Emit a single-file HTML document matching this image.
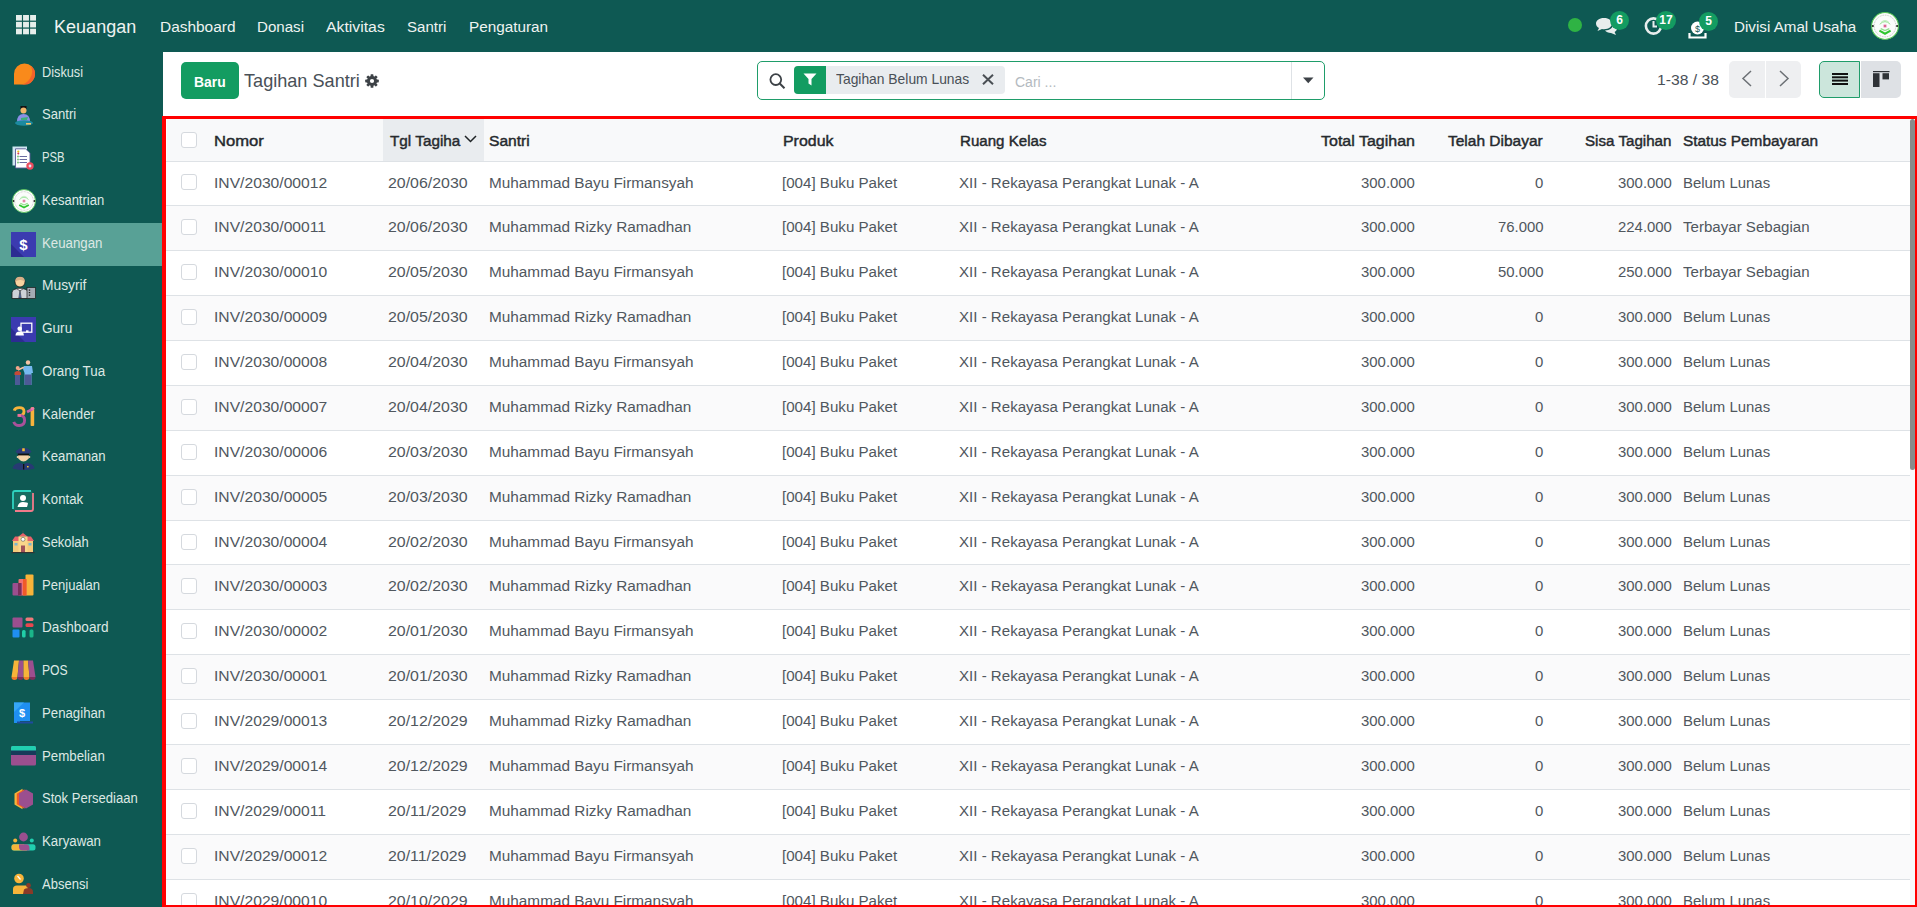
<!DOCTYPE html><html><head><meta charset="utf-8"><title>Tagihan Santri</title><style>
*{box-sizing:content-box}
html,body{margin:0;padding:0;width:1917px;height:907px;overflow:hidden;background:#fff;font-family:"Liberation Sans",sans-serif}
.t{position:absolute;white-space:nowrap;line-height:1;transform-origin:0 0}
.badge{position:absolute;border-radius:50%;background:#139c61;color:#fff;font-size:12px;font-weight:bold;text-align:center;line-height:19px;font-family:"Liberation Sans",sans-serif}
.cb{position:absolute;width:14px;height:14px;border:1px solid #d5d9de;border-radius:3px;background:#fff}
</style></head><body><div style="position:absolute;left:0;top:0;width:1917px;height:52px;background:#0e5953"></div>
<svg style="position:absolute;left:16.3px;top:15px" width="21" height="20" viewBox="0 0 21 20"><rect x="0.00" y="0.00" width="5.9" height="5.6" fill="#e6eeeb"/><rect x="7.05" y="0.00" width="5.9" height="5.6" fill="#e6eeeb"/><rect x="14.10" y="0.00" width="5.9" height="5.6" fill="#e6eeeb"/><rect x="0.00" y="6.85" width="5.9" height="5.6" fill="#e6eeeb"/><rect x="7.05" y="6.85" width="5.9" height="5.6" fill="#e6eeeb"/><rect x="14.10" y="6.85" width="5.9" height="5.6" fill="#e6eeeb"/><rect x="0.00" y="13.70" width="5.9" height="5.6" fill="#e6eeeb"/><rect x="7.05" y="13.70" width="5.9" height="5.6" fill="#e6eeeb"/><rect x="14.10" y="13.70" width="5.9" height="5.6" fill="#e6eeeb"/></svg>
<span class="t" style="left:54.10px;top:17.96px;font-size:18.00px;color:#eef3f1;">Keuangan</span>
<span class="t" style="left:159.60px;top:18.88px;font-size:15.50px;color:#eef3f1;transform:scale(0.9957,1.0000);">Dashboard</span>
<span class="t" style="left:257.40px;top:18.88px;font-size:15.50px;color:#eef3f1;transform:scale(0.9741,1.0000);">Donasi</span>
<span class="t" style="left:326.40px;top:18.88px;font-size:15.50px;color:#eef3f1;transform:scale(1.0189,1.0000);">Aktivitas</span>
<span class="t" style="left:407.30px;top:18.88px;font-size:15.50px;color:#eef3f1;transform:scale(0.9707,1.0000);">Santri</span>
<span class="t" style="left:469.10px;top:18.88px;font-size:15.50px;color:#eef3f1;transform:scale(0.9869,1.0000);">Pengaturan</span>
<div style="position:absolute;left:1568px;top:18px;width:14px;height:14px;border-radius:50%;background:#2fb344"></div>
<svg style="position:absolute;left:1595px;top:17px" width="23" height="19" viewBox="0 0 23 19">
<path d="M9 1 C4 1 1 3.5 1 6.5 C1 8.5 2.3 10 4 11 L2.5 14 L7 12 C7.6 12.1 8.3 12.2 9 12.2 C14 12.2 17 9.5 17 6.5 C17 3.5 14 1 9 1Z" fill="#e8eded"/>
<path d="M18 7 C18.5 10.5 15 13.3 10 13.6 C11.2 15 13.3 16 16 16 L21 18 L19.6 15 C21 14.2 22 13 22 11.5 C22 9.5 20.5 7.8 18 7Z" fill="#e8eded"/>
</svg>
<div class="badge" style="left:1610px;top:11px;width:19px;height:19px;">6</div>
<svg style="position:absolute;left:1644px;top:16px" width="20" height="20" viewBox="0 0 20 20">
<circle cx="9.5" cy="10" r="7.6" fill="none" stroke="#e8eded" stroke-width="2.6"/>
<path d="M9.5 5 V10.5 H13" fill="none" stroke="#e8eded" stroke-width="2"/>
</svg>
<div class="badge" style="left:1656px;top:11px;width:20px;height:19px;">17</div>
<svg style="position:absolute;left:1688px;top:20px" width="20" height="19" viewBox="0 0 20 19">
<circle cx="9.5" cy="8" r="6.5" fill="#ffffff"/>
<text x="9.5" y="11.5" font-size="9" font-family="Liberation Sans" text-anchor="middle" fill="#0e5953">$</text>
<path d="M1.5 13 V17.5 H17.5 V13" fill="none" stroke="#ffffff" stroke-width="2.2"/>
</svg>
<div class="badge" style="left:1699px;top:12px;width:19px;height:19px;">5</div>
<span class="t" style="left:1733.50px;top:18.78px;font-size:15.50px;color:#eef3f1;transform:scale(0.9791,1.0000);">Divisi Amal Usaha</span>
<div style="position:absolute;left:1870.5px;top:11.8px;line-height:0"><svg width="28" height="28" viewBox="0 0 24 24"><circle cx="12" cy="12" r="11.5" fill="#fbfcfb" stroke="#55c455" stroke-width="0.9"/><circle cx="12" cy="12" r="9.3" fill="none" stroke="#9a9a9a" stroke-width="0.5" stroke-dasharray="0.8 0.7"/><circle cx="12" cy="12" r="7.6" fill="#fbfcfb"/><path d="M7.5 10.5 Q12 6 16.5 10.5" fill="none" stroke="#8ee08a" stroke-width="0.8"/><path d="M8.5 9 Q12 5.5 15.5 9" fill="none" stroke="#a8e6a4" stroke-width="0.6"/><circle cx="12" cy="12" r="1.8" fill="#eac0d0"/><circle cx="12" cy="12" r="0.8" fill="#d83a78"/><path d="M8.3 14.3 L12 16 L15.7 14.3" fill="none" stroke="#8fe08a" stroke-width="1.1"/><path d="M7.2 16 L12 18.6 L16.8 16" fill="none" stroke="#2fc62f" stroke-width="1.8"/><circle cx="1.6" cy="12" r="0.9" fill="#222"/><circle cx="22.4" cy="12" r="0.9" fill="#222"/></svg></div>
<div style="position:absolute;left:0;top:52px;width:163px;height:855px;background:#0e5953"></div>
<div style="position:absolute;left:12.5px;top:62.5px;line-height:0"><svg width="22" height="22" viewBox="0 0 22 22"><path d="M11.5 0.5 A10.5 10.5 0 0 1 22 11 A10.5 10.5 0 0 1 11.5 21.5 H1 V11 A10.5 10.5 0 0 1 11.5 0.5Z" fill="#f98a1b"/><path d="M17.5 2.4 A10.5 10.5 0 0 1 11.5 21.5 H5 A13 13 0 0 0 17.5 2.4Z" fill="#f4622a"/></svg></div>
<span class="t" style="left:42.10px;top:63.68px;font-size:15.40px;color:#dde8e4;transform:scale(0.8281,1.0000);">Diskusi</span>
<div style="position:absolute;left:14.0px;top:106.0px;line-height:0"><svg width="20" height="20" viewBox="0 0 20 20"><rect x="6.5" y="0" width="6" height="3" fill="#111"/><circle cx="9.5" cy="4.5" r="3" fill="#f0b56a"/><path d="M3 16 Q3 8 9.5 8 Q16 8 16 16Z" fill="#8a8fe6"/><path d="M7 12 L14 11 L13 14 L7 14Z" fill="#3ab07a"/><ellipse cx="10" cy="17" rx="9" ry="2.8" fill="#1c8aa0"/><rect x="12" y="17" width="5" height="1.6" fill="#f3c46b"/></svg></div>
<span class="t" style="left:42.10px;top:106.42px;font-size:15.40px;color:#dde8e4;transform:scale(0.8502,1.0000);">Santri</span>
<div style="position:absolute;left:11.5px;top:146.0px;line-height:0"><svg width="22" height="24" viewBox="0 0 22 24"><rect x="0.5" y="0.5" width="14.5" height="19" fill="#cfe6f1"/><path d="M3.5 2.8 H13.5 L18 7 V22 H3.5Z" fill="#fff" stroke="#5a5a96" stroke-width="0.9"/><circle cx="6.3" cy="5.5" r="1.1" fill="#e8c020"/><circle cx="6.3" cy="7.5" r="1" fill="#d23a52"/><circle cx="6" cy="10.5" r="0.9" fill="#6cc070"/><circle cx="6" cy="13.5" r="0.9" fill="#6cc070"/><circle cx="6" cy="16.5" r="0.9" fill="#6cc070"/><path d="M7.5 10.5H15M7.5 13.5H15M7.5 16.5H15" stroke="#5a5a96" stroke-width="0.9"/><circle cx="18" cy="20" r="3.7" fill="#ec4c5e"/><circle cx="18" cy="20" r="1.4" fill="#dfe7f5"/></svg></div>
<span class="t" style="left:42.10px;top:149.16px;font-size:15.40px;color:#dde8e4;transform:scale(0.7366,1.0000);">PSB</span>
<div style="position:absolute;left:11.6px;top:189.2px;line-height:0"><svg width="24" height="24" viewBox="0 0 24 24"><circle cx="12" cy="12" r="11.5" fill="#fbfcfb" stroke="#55c455" stroke-width="0.9"/><circle cx="12" cy="12" r="9.3" fill="none" stroke="#9a9a9a" stroke-width="0.5" stroke-dasharray="0.8 0.7"/><circle cx="12" cy="12" r="7.6" fill="#fbfcfb"/><path d="M7.5 10.5 Q12 6 16.5 10.5" fill="none" stroke="#8ee08a" stroke-width="0.8"/><path d="M8.5 9 Q12 5.5 15.5 9" fill="none" stroke="#a8e6a4" stroke-width="0.6"/><circle cx="12" cy="12" r="1.8" fill="#eac0d0"/><circle cx="12" cy="12" r="0.8" fill="#d83a78"/><path d="M8.3 14.3 L12 16 L15.7 14.3" fill="none" stroke="#8fe08a" stroke-width="1.1"/><path d="M7.2 16 L12 18.6 L16.8 16" fill="none" stroke="#2fc62f" stroke-width="1.8"/><circle cx="1.6" cy="12" r="0.9" fill="#222"/><circle cx="22.4" cy="12" r="0.9" fill="#222"/></svg></div>
<span class="t" style="left:42.10px;top:191.90px;font-size:15.40px;color:#dde8e4;transform:scale(0.8448,1.0000);">Kesantrian</span>
<div style="position:absolute;left:0;top:222.96px;width:162px;height:42.74px;background:#58a196"></div>
<div style="position:absolute;left:11.0px;top:232.0px;line-height:0"><svg width="25" height="25" viewBox="0 0 25 25"><rect width="25" height="25" fill="#3b3bb0"/><path d="M0 25 L0 12 L13 25Z" fill="#2c2c92"/><text x="12.5" y="18" font-size="15" font-weight="bold" font-family="Liberation Sans" text-anchor="middle" fill="#fff">$</text></svg></div>
<span class="t" style="left:42.10px;top:234.64px;font-size:15.40px;color:#dde8e4;transform:scale(0.8615,1.0000);">Keuangan</span>
<div style="position:absolute;left:11.0px;top:274.5px;line-height:0"><svg width="25" height="24" viewBox="0 0 25 24"><path d="M1 23.5 V17.5 Q1 13.5 9 13.5 Q17 13.5 17 17.5 V23.5Z" fill="#cdd1d8" stroke="#1a1a1a" stroke-width="0.8"/><path d="M6 13.8 L9 16 L12 13.8" fill="#e8ecf0" stroke="#1a1a1a" stroke-width="0.6"/><path d="M9 15.5 L10.2 23 L7.8 23Z" fill="#5a7ac0" stroke="#1a1a1a" stroke-width="0.5"/><circle cx="9" cy="7" r="5" fill="#f7d3a0" stroke="#1a1a1a" stroke-width="0.8"/><path d="M4 7 Q4 1.8 9 1.8 Q14 1.8 14 7 Q11 4.5 9 5 Q6.5 5 4 7Z" fill="#d8b088"/><rect x="16" y="12.5" width="8.5" height="11" fill="#a4abb4" stroke="#1a1a1a" stroke-width="0.7"/><path d="M18.5 14.5v1.2M18.5 17v1.2M18.5 19.5v1.2" stroke="#222" stroke-width="1.4"/></svg></div>
<span class="t" style="left:42.10px;top:277.38px;font-size:15.40px;color:#dde8e4;transform:scale(0.8963,1.0000);">Musyrif</span>
<div style="position:absolute;left:11.0px;top:317.0px;line-height:0"><svg width="25" height="25" viewBox="0 0 25 25"><rect width="25" height="25" fill="#3b3bb0"/><path d="M0 25 L0 11 L14 25Z" fill="#2c2c92"/><rect x="10" y="6.2" width="10.8" height="9" fill="none" stroke="#fff" stroke-width="1.3"/><circle cx="8.7" cy="11.7" r="2.3" fill="#fff"/><path d="M4.5 18.5 Q4.5 14.5 8.7 14.5 Q12.9 14.5 12.9 18.5Z" fill="#fff"/><rect x="15" y="13.3" width="2.5" height="2" fill="#fff"/></svg></div>
<span class="t" style="left:42.10px;top:320.12px;font-size:15.40px;color:#dde8e4;transform:scale(0.8822,1.0000);">Guru</span>
<div style="position:absolute;left:13.5px;top:359.5px;line-height:0"><svg width="20" height="26" viewBox="0 0 20 26"><circle cx="14" cy="2.5" r="2.2" fill="#f6c3a6"/><path d="M10 6 H18 L19 13 H17.5 V25 H10.5 V13 L9 9Z" fill="#76b9f0"/><rect x="10.5" y="14.5" width="7" height="10.5" fill="#4d5a96"/><path d="M9.8 7.2 L4 10" stroke="#f6c3a6" stroke-width="1.5"/><circle cx="3.7" cy="8" r="2" fill="#f3a58a"/><path d="M0.5 12.5 Q3.7 9.7 7 12.5 V15 H0.5Z" fill="#c54a37"/><rect x="1" y="15" width="5" height="10" fill="#4d5a96"/></svg></div>
<span class="t" style="left:42.10px;top:362.86px;font-size:15.40px;color:#dde8e4;transform:scale(0.8684,1.0000);">Orang Tua</span>
<div style="position:absolute;left:12.0px;top:405.5px;line-height:0"><svg width="23" height="21" viewBox="0 0 23 21"><path d="M2.2 4.6 Q3 1.6 7.3 1.6 Q12 1.6 12 5.4 Q12 9.4 7.3 9.4" fill="none" stroke="#f7b33c" stroke-width="2.9"/><path d="M7.3 9.4 Q12.6 9.4 12.6 14.3 Q12.6 19.5 7.3 19.5 Q2.8 19.5 1.8 15.8" fill="none" stroke="#a9519a" stroke-width="2.9"/><path d="M5.5 9.4 H9" stroke="#ee6f9a" stroke-width="2.9"/><rect x="18.6" y="1.2" width="3.6" height="18.8" rx="0.8" fill="#f7b33c"/><path d="M21.5 2.6 L15 6" stroke="#c860a8" stroke-width="2.6"/><circle cx="20.6" cy="2.6" r="1.7" fill="#ee7aa8"/></svg></div>
<span class="t" style="left:42.10px;top:405.60px;font-size:15.40px;color:#dde8e4;transform:scale(0.8597,1.0000);">Kalender</span>
<div style="position:absolute;left:12.0px;top:446.0px;line-height:0"><svg width="23" height="24" viewBox="0 0 23 24"><path d="M0.5 22.5 Q1 18 8 16.8 L11.5 18.3 L15 16.8 Q22 18 22.5 22.5 Q11.5 25.5 0.5 22.5Z" fill="#273a73"/><path d="M6.2 9 V12.5 Q11.5 18.5 16.8 12.5 V9Z" fill="#f5d3a8"/><circle cx="5.7" cy="11" r="1" fill="#f5d3a8"/><circle cx="17.3" cy="11" r="1" fill="#f5d3a8"/><path d="M3.5 5.2 Q11.5 -1.5 19.5 5.2 L17.5 7.8 H5.5Z" fill="#2a3b78"/><rect x="10.2" y="2.2" width="2.6" height="3" rx="0.5" fill="#f0c030"/><rect x="5.8" y="7.6" width="11.4" height="1.8" fill="#111"/><rect x="11" y="18" width="1.3" height="5.5" fill="#111"/><rect x="15" y="20" width="1.6" height="1.4" fill="#f0c030"/></svg></div>
<span class="t" style="left:42.10px;top:448.34px;font-size:15.40px;color:#dde8e4;transform:scale(0.8552,1.0000);">Keamanan</span>
<div style="position:absolute;left:12.0px;top:489.5px;line-height:0"><svg width="22" height="22" viewBox="0 0 22 22"><path d="M3 1 H19 Q21 1 21 3 V19 Q21 21 19 21 H3 Q1 21 1 19 V3 Q1 1 3 1Z" fill="#176c61"/><path d="M1 19 V3 Q1 1 3 1 H19" fill="none" stroke="#2fd3c0" stroke-width="1.8"/><path d="M21 3 V19 Q21 21 19 21 H3" fill="none" stroke="#f07a8a" stroke-width="1.8"/><circle cx="11" cy="8" r="3" fill="#fff"/><path d="M5.5 17 Q6.5 12 11 12 Q15.5 12 16 13.5 L15 17Z" fill="#fff"/></svg></div>
<span class="t" style="left:42.10px;top:491.08px;font-size:15.40px;color:#dde8e4;transform:scale(0.8568,1.0000);">Kontak</span>
<div style="position:absolute;left:11.0px;top:530.0px;line-height:0"><svg width="24" height="24" viewBox="0 0 24 24"><path d="M12 0.5 V3" stroke="#555" stroke-width="0.7"/><path d="M1 11 L4 6.5 H20 L23 11Z" fill="#e7626a"/><path d="M7.5 6.5 L12 3 L16.5 6.5Z" fill="#e7626a"/><rect x="2" y="11" width="20" height="11.5" fill="#f5c97a"/><rect x="7.5" y="6.5" width="9" height="16" fill="#f9d68a"/><circle cx="12" cy="9.3" r="2" fill="#fff" stroke="#555" stroke-width="0.6"/><rect x="10" y="15.5" width="4" height="7" fill="#a0525a"/><rect x="3.5" y="13" width="3" height="2.5" fill="#7cb6d0"/><rect x="17.5" y="13" width="3" height="2.5" fill="#7cb6d0"/><rect x="0.5" y="22" width="23" height="1.2" fill="#333"/></svg></div>
<span class="t" style="left:42.10px;top:533.82px;font-size:15.40px;color:#dde8e4;transform:scale(0.8409,1.0000);">Sekolah</span>
<div style="position:absolute;left:12.0px;top:574.0px;line-height:0"><svg width="22" height="22" viewBox="0 0 22 22"><rect x="13.5" y="0.5" width="8" height="21" rx="1" fill="#f7b43a"/><rect x="6.5" y="5" width="8" height="16.5" rx="1" fill="#f07070"/><rect x="11" y="5" width="3.5" height="16.5" fill="#f05a28"/><rect x="0.5" y="9" width="9" height="12.5" rx="1" fill="#9b4f8f"/><rect x="6" y="9" width="3.5" height="12.5" fill="#7a2f5c"/></svg></div>
<span class="t" style="left:42.10px;top:576.56px;font-size:15.40px;color:#dde8e4;transform:scale(0.8482,1.0000);">Penjualan</span>
<div style="position:absolute;left:12.0px;top:617.0px;line-height:0"><svg width="22" height="21" viewBox="0 0 22 21"><rect x="0.5" y="0.5" width="10" height="10" rx="1" fill="#9b4f8f"/><rect x="13.5" y="0.5" width="8" height="3.6" rx="1.5" fill="#f07a7a"/><rect x="13.5" y="6.3" width="8" height="3.8" rx="1.5" fill="#e8474f"/><rect x="0.5" y="12.5" width="7" height="8" rx="1" fill="#1f8ff0"/><rect x="10" y="13" width="3.6" height="7.5" rx="1.5" fill="#21cfa8"/><rect x="17.5" y="12.5" width="4" height="8" rx="1.5" fill="#1ab58a"/></svg></div>
<span class="t" style="left:42.10px;top:619.30px;font-size:15.40px;color:#dde8e4;transform:scale(0.8840,1.0000);">Dashboard</span>
<div style="position:absolute;left:10.5px;top:660.0px;line-height:0"><svg width="25" height="20" viewBox="0 0 25 20"><path d="M3 0.5 H8 L6.5 17 H0.5Z" fill="#f7b43a"/><path d="M8 0.5 H12.5 L12.5 17 H6.5Z" fill="#9b4f8f"/><path d="M12.5 0.5 H17 L18.5 17 H12.5Z" fill="#f7b43a"/><path d="M17 0.5 H22 L24.5 17 H18.5Z" fill="#9b4f8f"/><path d="M0.5 17 A3 3 0 0 0 6.5 17Z" fill="#f07a2a"/><path d="M6.5 17 A3 3 0 0 0 12.5 17Z" fill="#7a2f5c"/><path d="M12.5 17 A3 3 0 0 0 18.5 17Z" fill="#f07a2a"/><path d="M18.5 17 A3 3 0 0 0 24.5 17Z" fill="#7a2f5c"/></svg></div>
<span class="t" style="left:42.10px;top:662.04px;font-size:15.40px;color:#dde8e4;transform:scale(0.7902,1.0000);">POS</span>
<div style="position:absolute;left:12.0px;top:702.0px;line-height:0"><svg width="22" height="22" viewBox="0 0 22 22"><path d="M2 0.5 H18 V19 H8 V21 H2Z" fill="#1f8ff0"/><path d="M2 0.5 H12 L2 10Z" fill="#36a7f6"/><path d="M5 19.5 H21 V21.5 H5Z" fill="#1f4aa0"/><text x="10" y="14.5" font-size="11" font-weight="bold" font-family="Liberation Sans" text-anchor="middle" fill="#fff">$</text></svg></div>
<span class="t" style="left:42.10px;top:704.78px;font-size:15.40px;color:#dde8e4;transform:scale(0.8582,1.0000);">Penagihan</span>
<div style="position:absolute;left:10.5px;top:746.0px;line-height:0"><svg width="25" height="20" viewBox="0 0 25 20"><rect x="0" y="0" width="25" height="19.5" rx="1.5" fill="#9b4f8f"/><rect x="0" y="0" width="25" height="5.5" rx="1.5" fill="#21cfb0"/><rect x="0" y="4.5" width="25" height="4.5" fill="#183a5a"/></svg></div>
<span class="t" style="left:42.10px;top:747.52px;font-size:15.40px;color:#dde8e4;transform:scale(0.8631,1.0000);">Pembelian</span>
<div style="position:absolute;left:13.0px;top:788.0px;line-height:0"><svg width="21" height="22" viewBox="0 0 21 22"><path d="M9.5 0.8 L1.5 5.5 V16.5 L9.5 21.2Z" fill="#f7b43a"/><path d="M11.5 1.2 L3.8 5.8 V16.2 L11.5 20.8Z" fill="#f05a28"/><path d="M13 1.5 L20 5.5 V16.5 L13 20.5 L6 16.5 V5.5Z" fill="#9b4f8f"/></svg></div>
<span class="t" style="left:42.10px;top:790.26px;font-size:15.40px;color:#dde8e4;transform:scale(0.8477,1.0000);">Stok Persediaan</span>
<div style="position:absolute;left:10.5px;top:832.0px;line-height:0"><svg width="25" height="19" viewBox="0 0 25 19"><circle cx="12.5" cy="5" r="4.4" fill="#9b4f8f"/><circle cx="4.2" cy="8.6" r="2" fill="#f7b43a"/><circle cx="20.8" cy="8.6" r="2" fill="#21cfb0"/><rect x="0.5" y="12.3" width="24" height="6.2" rx="2.5" fill="#21cfb0"/><path d="M3 12.3 H13 L16 18.5 H3 A2.5 2.5 0 0 1 0.5 16 V14.8 A2.5 2.5 0 0 1 3 12.3Z" fill="#f7b43a"/><path d="M8 12.3 H15 Q18.5 12.3 18.5 16 V18.5 H12 Q8 18.5 8 15Z" fill="#9b4f8f"/></svg></div>
<span class="t" style="left:42.10px;top:833.00px;font-size:15.40px;color:#dde8e4;transform:scale(0.8615,1.0000);">Karyawan</span>
<div style="position:absolute;left:12.0px;top:873.0px;line-height:0"><svg width="22" height="22" viewBox="0 0 22 22"><circle cx="7" cy="5.5" r="4.8" fill="#f7b43a"/><path d="M5.5 3 L8.5 6.5" stroke="#fff" stroke-width="1.2"/><path d="M1 21 V16 Q1 12.5 5 12.5 H14 Q16 12.5 16 15 V21Z" fill="#f7b43a"/><circle cx="16.5" cy="12.5" r="2.4" fill="#8a3a28"/><path d="M11 21 L12 16.5 Q13 15 16.5 15 Q21 15 21 19 V21Z" fill="#8a3a28"/></svg></div>
<span class="t" style="left:42.10px;top:875.74px;font-size:15.40px;color:#dde8e4;transform:scale(0.8468,1.0000);">Absensi</span>
<div style="position:absolute;left:163px;top:52px;width:1754px;height:855px;background:#fff"></div>
<div style="position:absolute;left:181px;top:62px;width:58px;height:37px;border-radius:5px;background:#139c61"></div>
<span class="t" style="left:194.30px;top:73.90px;font-size:15.00px;color:#ffffff;font-weight:bold;transform:scale(0.9248,1.0000);">Baru</span>
<span class="t" style="left:243.50px;top:70.52px;font-size:19.00px;color:#495057;transform:scale(0.9533,1.0000);">Tagihan Santri</span>
<svg style="position:absolute;left:364.6px;top:74.4px" width="14" height="14" viewBox="0 0 14 14"><g fill="#3d4247"><circle cx="7" cy="7" r="5.1"/><rect x="5.6" y="0.2" width="2.8" height="13.6" rx="0.6" transform="rotate(0 7 7)"/><rect x="5.6" y="0.2" width="2.8" height="13.6" rx="0.6" transform="rotate(45 7 7)"/><rect x="5.6" y="0.2" width="2.8" height="13.6" rx="0.6" transform="rotate(90 7 7)"/><rect x="5.6" y="0.2" width="2.8" height="13.6" rx="0.6" transform="rotate(135 7 7)"/></g><circle cx="7" cy="7" r="2.1" fill="#fff"/></svg>
<div style="position:absolute;left:757px;top:61px;width:566px;height:37px;border:1px solid #1f9d6a;border-radius:5px;background:#fff"></div>
<div style="position:absolute;left:1291px;top:62px;width:1px;height:37px;background:#dee2e6"></div>
<svg style="position:absolute;left:769px;top:73px" width="17" height="16" viewBox="0 0 17 16">
<circle cx="6.8" cy="6.6" r="5.4" fill="none" stroke="#3d4247" stroke-width="1.8"/><path d="M10.7 10.5 L15.5 15.3" stroke="#3d4247" stroke-width="2"/></svg>
<div style="position:absolute;left:794px;top:66px;width:211px;height:28px;border-radius:4px;background:#e9ecef"></div>
<div style="position:absolute;left:794px;top:66px;width:32px;height:28px;border-radius:4px 0 0 4px;background:#139c61"></div>
<svg style="position:absolute;left:803px;top:73px" width="14" height="13" viewBox="0 0 14 13">
<path d="M0.5 0.5 H13.5 L8.5 6 V12.5 L5.5 10.5 V6Z" fill="#fff"/></svg>
<span class="t" style="left:835.80px;top:72.13px;font-size:14.50px;color:#495057;transform:scale(0.9551,1.0000);">Tagihan Belum Lunas</span>
<svg style="position:absolute;left:982px;top:74px" width="12" height="11" viewBox="0 0 12 11">
<path d="M1 0.8 L11 10.2 M11 0.8 L1 10.2" stroke="#4a4f54" stroke-width="2"/></svg>
<span class="t" style="left:1014.80px;top:73.56px;font-size:15.40px;color:#b4bac0;transform:scale(0.9106,1.0000);">Cari ...</span>
<svg style="position:absolute;left:1303px;top:77px" width="11" height="7" viewBox="0 0 11 7"><path d="M0 0.5 H10.5 L5.25 6.3Z" fill="#3d4247"/></svg>
<span class="t" style="left:1657.30px;top:71.96px;font-size:15.40px;color:#495057;transform:scale(1.0184,1.0000);">1-38 / 38</span>
<div style="position:absolute;left:1729px;top:61px;width:72px;height:37px;border-radius:5px;background:#eeeff1"></div>
<div style="position:absolute;left:1765px;top:61px;width:1px;height:37px;background:#ffffff"></div>
<svg style="position:absolute;left:1741px;top:70px" width="12" height="17" viewBox="0 0 12 17"><path d="M10 1 L2 8.5 L10 16" fill="none" stroke="#6c7075" stroke-width="1.5"/></svg>
<svg style="position:absolute;left:1778px;top:70px" width="12" height="17" viewBox="0 0 12 17"><path d="M2 1 L10 8.5 L2 16" fill="none" stroke="#6c7075" stroke-width="1.5"/></svg>
<div style="position:absolute;left:1861px;top:61px;width:40px;height:37px;border-radius:0 5px 5px 0;background:#dee1e5"></div>
<div style="position:absolute;left:1819px;top:61px;width:39px;height:35px;border:1px solid #1f9d6a;border-radius:5px 0 0 5px;background:#cce6dc"></div>
<svg style="position:absolute;left:1832px;top:73px" width="16" height="12" viewBox="0 0 16 12">
<rect x="0" y="0" width="16" height="2" fill="#111"/><rect x="0" y="3.3" width="16" height="2" fill="#111"/><rect x="0" y="6.6" width="16" height="2" fill="#111"/><rect x="0" y="10" width="16" height="2" fill="#111"/></svg>
<svg style="position:absolute;left:1872.5px;top:71px" width="17" height="16" viewBox="0 0 17 16">
<rect x="0" y="0" width="16.5" height="1.2" fill="#2f3337"/><rect x="0" y="2.2" width="6.5" height="13.8" fill="#2f3337"/><rect x="9.5" y="2.2" width="6.5" height="6.2" fill="#2f3337"/></svg>
<div style="position:absolute;left:167px;top:119px;width:1743px;height:42px;background:#f8f9fa"></div>
<div style="position:absolute;left:383px;top:119px;width:101px;height:42px;background:#e9ecef"></div>
<div style="position:absolute;left:165px;top:161px;width:1745px;height:1px;background:#dee2e6"></div>
<div class="cb" style="left:181px;top:132px"></div>
<span class="t" style="left:214.20px;top:132.76px;font-size:15.40px;color:#262a2e;transform:scale(1.0797,1.0000);-webkit-text-stroke:0.45px #262a2e;">Nomor</span>
<span class="t" style="left:389.50px;top:132.76px;font-size:15.40px;color:#262a2e;transform:scale(0.9944,1.0000);-webkit-text-stroke:0.45px #262a2e;">Tgl Tagiha</span>
<span class="t" style="left:489.30px;top:132.76px;font-size:15.40px;color:#262a2e;transform:scale(1.0143,1.0000);-webkit-text-stroke:0.45px #262a2e;">Santri</span>
<span class="t" style="left:783.20px;top:132.76px;font-size:15.40px;color:#262a2e;transform:scale(1.0345,1.0000);-webkit-text-stroke:0.45px #262a2e;">Produk</span>
<span class="t" style="left:960.10px;top:132.76px;font-size:15.40px;color:#262a2e;transform:scale(0.9809,1.0000);-webkit-text-stroke:0.45px #262a2e;">Ruang Kelas</span>
<span class="t" style="left:1320.70px;top:132.76px;font-size:15.40px;color:#262a2e;transform:scale(1.0390,1.0000);-webkit-text-stroke:0.45px #262a2e;">Total Tagihan</span>
<span class="t" style="left:1447.90px;top:132.76px;font-size:15.40px;color:#262a2e;transform:scale(1.0068,1.0000);-webkit-text-stroke:0.45px #262a2e;">Telah Dibayar</span>
<span class="t" style="left:1584.80px;top:132.76px;font-size:15.40px;color:#262a2e;transform:scale(0.9840,1.0000);-webkit-text-stroke:0.45px #262a2e;">Sisa Tagihan</span>
<span class="t" style="left:1682.90px;top:132.76px;font-size:15.40px;color:#262a2e;-webkit-text-stroke:0.45px #262a2e;">Status Pembayaran</span>
<svg style="position:absolute;left:463.5px;top:134.5px" width="13" height="8" viewBox="0 0 13 8"><path d="M1 1 L6.5 6.5 L12 1" fill="none" stroke="#1f2326" stroke-width="1.5"/></svg>
<div style="position:absolute;left:165px;top:205px;width:1745px;height:1px;background:#dee2e6"></div>
<div class="cb" style="left:181px;top:174px"></div>
<span class="t" style="left:214.00px;top:175.97px;font-size:16.00px;color:#50575e;transform:scale(0.9788,0.9550);">INV/2030/00012</span>
<span class="t" style="left:388.20px;top:175.97px;font-size:16.00px;color:#50575e;transform:scale(0.9940,0.9550);">20/06/2030</span>
<span class="t" style="left:488.60px;top:175.97px;font-size:16.00px;color:#50575e;transform:scale(0.9583,0.9550);">Muhammad Bayu Firmansyah</span>
<span class="t" style="left:782.20px;top:175.97px;font-size:16.00px;color:#50575e;transform:scale(0.9454,0.9550);">[004] Buku Paket</span>
<span class="t" style="left:958.90px;top:175.97px;font-size:16.00px;color:#50575e;transform:scale(0.9427,0.9550);">XII - Rekayasa Perangkat Lunak - A</span>
<span class="t" style="left:1360.80px;top:175.97px;font-size:16.00px;color:#50575e;transform:scale(0.9319,0.9550);">300.000</span>
<span class="t" style="left:1535.31px;top:175.97px;font-size:16.00px;color:#50575e;transform:scale(0.9319,0.9550);">0</span>
<span class="t" style="left:1618.30px;top:175.97px;font-size:16.00px;color:#50575e;transform:scale(0.9319,0.9550);">300.000</span>
<span class="t" style="left:1683.00px;top:175.97px;font-size:16.00px;color:#50575e;transform:scale(0.9326,0.9550);">Belum Lunas</span>
<div style="position:absolute;left:165px;top:206px;width:1745px;height:44px;background:#fafafb"></div>
<div style="position:absolute;left:165px;top:250px;width:1745px;height:1px;background:#dee2e6"></div>
<div class="cb" style="left:181px;top:219px"></div>
<span class="t" style="left:214.00px;top:220.47px;font-size:16.00px;color:#50575e;transform:scale(0.9788,0.9550);">INV/2030/00011</span>
<span class="t" style="left:388.20px;top:220.47px;font-size:16.00px;color:#50575e;transform:scale(0.9940,0.9550);">20/06/2030</span>
<span class="t" style="left:488.60px;top:220.47px;font-size:16.00px;color:#50575e;transform:scale(0.9599,0.9550);">Muhammad Rizky Ramadhan</span>
<span class="t" style="left:782.20px;top:220.47px;font-size:16.00px;color:#50575e;transform:scale(0.9454,0.9550);">[004] Buku Paket</span>
<span class="t" style="left:958.90px;top:220.47px;font-size:16.00px;color:#50575e;transform:scale(0.9427,0.9550);">XII - Rekayasa Perangkat Lunak - A</span>
<span class="t" style="left:1360.80px;top:220.47px;font-size:16.00px;color:#50575e;transform:scale(0.9319,0.9550);">300.000</span>
<span class="t" style="left:1497.99px;top:220.47px;font-size:16.00px;color:#50575e;transform:scale(0.9319,0.9550);">76.000</span>
<span class="t" style="left:1618.30px;top:220.47px;font-size:16.00px;color:#50575e;transform:scale(0.9319,0.9550);">224.000</span>
<span class="t" style="left:1683.00px;top:220.47px;font-size:16.00px;color:#50575e;transform:scale(0.9425,0.9550);">Terbayar Sebagian</span>
<div style="position:absolute;left:165px;top:295px;width:1745px;height:1px;background:#dee2e6"></div>
<div class="cb" style="left:181px;top:264px"></div>
<span class="t" style="left:214.00px;top:265.47px;font-size:16.00px;color:#50575e;transform:scale(0.9788,0.9550);">INV/2030/00010</span>
<span class="t" style="left:388.20px;top:265.47px;font-size:16.00px;color:#50575e;transform:scale(0.9940,0.9550);">20/05/2030</span>
<span class="t" style="left:488.60px;top:265.47px;font-size:16.00px;color:#50575e;transform:scale(0.9583,0.9550);">Muhammad Bayu Firmansyah</span>
<span class="t" style="left:782.20px;top:265.47px;font-size:16.00px;color:#50575e;transform:scale(0.9454,0.9550);">[004] Buku Paket</span>
<span class="t" style="left:958.90px;top:265.47px;font-size:16.00px;color:#50575e;transform:scale(0.9427,0.9550);">XII - Rekayasa Perangkat Lunak - A</span>
<span class="t" style="left:1360.80px;top:265.47px;font-size:16.00px;color:#50575e;transform:scale(0.9319,0.9550);">300.000</span>
<span class="t" style="left:1497.99px;top:265.47px;font-size:16.00px;color:#50575e;transform:scale(0.9319,0.9550);">50.000</span>
<span class="t" style="left:1618.30px;top:265.47px;font-size:16.00px;color:#50575e;transform:scale(0.9319,0.9550);">250.000</span>
<span class="t" style="left:1683.00px;top:265.47px;font-size:16.00px;color:#50575e;transform:scale(0.9425,0.9550);">Terbayar Sebagian</span>
<div style="position:absolute;left:165px;top:296px;width:1745px;height:44px;background:#fafafb"></div>
<div style="position:absolute;left:165px;top:340px;width:1745px;height:1px;background:#dee2e6"></div>
<div class="cb" style="left:181px;top:309px"></div>
<span class="t" style="left:214.00px;top:310.47px;font-size:16.00px;color:#50575e;transform:scale(0.9788,0.9550);">INV/2030/00009</span>
<span class="t" style="left:388.20px;top:310.47px;font-size:16.00px;color:#50575e;transform:scale(0.9940,0.9550);">20/05/2030</span>
<span class="t" style="left:488.60px;top:310.47px;font-size:16.00px;color:#50575e;transform:scale(0.9599,0.9550);">Muhammad Rizky Ramadhan</span>
<span class="t" style="left:782.20px;top:310.47px;font-size:16.00px;color:#50575e;transform:scale(0.9454,0.9550);">[004] Buku Paket</span>
<span class="t" style="left:958.90px;top:310.47px;font-size:16.00px;color:#50575e;transform:scale(0.9427,0.9550);">XII - Rekayasa Perangkat Lunak - A</span>
<span class="t" style="left:1360.80px;top:310.47px;font-size:16.00px;color:#50575e;transform:scale(0.9319,0.9550);">300.000</span>
<span class="t" style="left:1535.31px;top:310.47px;font-size:16.00px;color:#50575e;transform:scale(0.9319,0.9550);">0</span>
<span class="t" style="left:1618.30px;top:310.47px;font-size:16.00px;color:#50575e;transform:scale(0.9319,0.9550);">300.000</span>
<span class="t" style="left:1683.00px;top:310.47px;font-size:16.00px;color:#50575e;transform:scale(0.9326,0.9550);">Belum Lunas</span>
<div style="position:absolute;left:165px;top:385px;width:1745px;height:1px;background:#dee2e6"></div>
<div class="cb" style="left:181px;top:354px"></div>
<span class="t" style="left:214.00px;top:355.47px;font-size:16.00px;color:#50575e;transform:scale(0.9788,0.9550);">INV/2030/00008</span>
<span class="t" style="left:388.20px;top:355.47px;font-size:16.00px;color:#50575e;transform:scale(0.9940,0.9550);">20/04/2030</span>
<span class="t" style="left:488.60px;top:355.47px;font-size:16.00px;color:#50575e;transform:scale(0.9583,0.9550);">Muhammad Bayu Firmansyah</span>
<span class="t" style="left:782.20px;top:355.47px;font-size:16.00px;color:#50575e;transform:scale(0.9454,0.9550);">[004] Buku Paket</span>
<span class="t" style="left:958.90px;top:355.47px;font-size:16.00px;color:#50575e;transform:scale(0.9427,0.9550);">XII - Rekayasa Perangkat Lunak - A</span>
<span class="t" style="left:1360.80px;top:355.47px;font-size:16.00px;color:#50575e;transform:scale(0.9319,0.9550);">300.000</span>
<span class="t" style="left:1535.31px;top:355.47px;font-size:16.00px;color:#50575e;transform:scale(0.9319,0.9550);">0</span>
<span class="t" style="left:1618.30px;top:355.47px;font-size:16.00px;color:#50575e;transform:scale(0.9319,0.9550);">300.000</span>
<span class="t" style="left:1683.00px;top:355.47px;font-size:16.00px;color:#50575e;transform:scale(0.9326,0.9550);">Belum Lunas</span>
<div style="position:absolute;left:165px;top:386px;width:1745px;height:44px;background:#fafafb"></div>
<div style="position:absolute;left:165px;top:430px;width:1745px;height:1px;background:#dee2e6"></div>
<div class="cb" style="left:181px;top:399px"></div>
<span class="t" style="left:214.00px;top:400.47px;font-size:16.00px;color:#50575e;transform:scale(0.9788,0.9550);">INV/2030/00007</span>
<span class="t" style="left:388.20px;top:400.47px;font-size:16.00px;color:#50575e;transform:scale(0.9940,0.9550);">20/04/2030</span>
<span class="t" style="left:488.60px;top:400.47px;font-size:16.00px;color:#50575e;transform:scale(0.9599,0.9550);">Muhammad Rizky Ramadhan</span>
<span class="t" style="left:782.20px;top:400.47px;font-size:16.00px;color:#50575e;transform:scale(0.9454,0.9550);">[004] Buku Paket</span>
<span class="t" style="left:958.90px;top:400.47px;font-size:16.00px;color:#50575e;transform:scale(0.9427,0.9550);">XII - Rekayasa Perangkat Lunak - A</span>
<span class="t" style="left:1360.80px;top:400.47px;font-size:16.00px;color:#50575e;transform:scale(0.9319,0.9550);">300.000</span>
<span class="t" style="left:1535.31px;top:400.47px;font-size:16.00px;color:#50575e;transform:scale(0.9319,0.9550);">0</span>
<span class="t" style="left:1618.30px;top:400.47px;font-size:16.00px;color:#50575e;transform:scale(0.9319,0.9550);">300.000</span>
<span class="t" style="left:1683.00px;top:400.47px;font-size:16.00px;color:#50575e;transform:scale(0.9326,0.9550);">Belum Lunas</span>
<div style="position:absolute;left:165px;top:475px;width:1745px;height:1px;background:#dee2e6"></div>
<div class="cb" style="left:181px;top:444px"></div>
<span class="t" style="left:214.00px;top:445.47px;font-size:16.00px;color:#50575e;transform:scale(0.9788,0.9550);">INV/2030/00006</span>
<span class="t" style="left:388.20px;top:445.47px;font-size:16.00px;color:#50575e;transform:scale(0.9940,0.9550);">20/03/2030</span>
<span class="t" style="left:488.60px;top:445.47px;font-size:16.00px;color:#50575e;transform:scale(0.9583,0.9550);">Muhammad Bayu Firmansyah</span>
<span class="t" style="left:782.20px;top:445.47px;font-size:16.00px;color:#50575e;transform:scale(0.9454,0.9550);">[004] Buku Paket</span>
<span class="t" style="left:958.90px;top:445.47px;font-size:16.00px;color:#50575e;transform:scale(0.9427,0.9550);">XII - Rekayasa Perangkat Lunak - A</span>
<span class="t" style="left:1360.80px;top:445.47px;font-size:16.00px;color:#50575e;transform:scale(0.9319,0.9550);">300.000</span>
<span class="t" style="left:1535.31px;top:445.47px;font-size:16.00px;color:#50575e;transform:scale(0.9319,0.9550);">0</span>
<span class="t" style="left:1618.30px;top:445.47px;font-size:16.00px;color:#50575e;transform:scale(0.9319,0.9550);">300.000</span>
<span class="t" style="left:1683.00px;top:445.47px;font-size:16.00px;color:#50575e;transform:scale(0.9326,0.9550);">Belum Lunas</span>
<div style="position:absolute;left:165px;top:476px;width:1745px;height:44px;background:#fafafb"></div>
<div style="position:absolute;left:165px;top:520px;width:1745px;height:1px;background:#dee2e6"></div>
<div class="cb" style="left:181px;top:489px"></div>
<span class="t" style="left:214.00px;top:490.47px;font-size:16.00px;color:#50575e;transform:scale(0.9788,0.9550);">INV/2030/00005</span>
<span class="t" style="left:388.20px;top:490.47px;font-size:16.00px;color:#50575e;transform:scale(0.9940,0.9550);">20/03/2030</span>
<span class="t" style="left:488.60px;top:490.47px;font-size:16.00px;color:#50575e;transform:scale(0.9599,0.9550);">Muhammad Rizky Ramadhan</span>
<span class="t" style="left:782.20px;top:490.47px;font-size:16.00px;color:#50575e;transform:scale(0.9454,0.9550);">[004] Buku Paket</span>
<span class="t" style="left:958.90px;top:490.47px;font-size:16.00px;color:#50575e;transform:scale(0.9427,0.9550);">XII - Rekayasa Perangkat Lunak - A</span>
<span class="t" style="left:1360.80px;top:490.47px;font-size:16.00px;color:#50575e;transform:scale(0.9319,0.9550);">300.000</span>
<span class="t" style="left:1535.31px;top:490.47px;font-size:16.00px;color:#50575e;transform:scale(0.9319,0.9550);">0</span>
<span class="t" style="left:1618.30px;top:490.47px;font-size:16.00px;color:#50575e;transform:scale(0.9319,0.9550);">300.000</span>
<span class="t" style="left:1683.00px;top:490.47px;font-size:16.00px;color:#50575e;transform:scale(0.9326,0.9550);">Belum Lunas</span>
<div style="position:absolute;left:165px;top:564px;width:1745px;height:1px;background:#dee2e6"></div>
<div class="cb" style="left:181px;top:534px"></div>
<span class="t" style="left:214.00px;top:534.97px;font-size:16.00px;color:#50575e;transform:scale(0.9788,0.9550);">INV/2030/00004</span>
<span class="t" style="left:388.20px;top:534.97px;font-size:16.00px;color:#50575e;transform:scale(0.9940,0.9550);">20/02/2030</span>
<span class="t" style="left:488.60px;top:534.97px;font-size:16.00px;color:#50575e;transform:scale(0.9583,0.9550);">Muhammad Bayu Firmansyah</span>
<span class="t" style="left:782.20px;top:534.97px;font-size:16.00px;color:#50575e;transform:scale(0.9454,0.9550);">[004] Buku Paket</span>
<span class="t" style="left:958.90px;top:534.97px;font-size:16.00px;color:#50575e;transform:scale(0.9427,0.9550);">XII - Rekayasa Perangkat Lunak - A</span>
<span class="t" style="left:1360.80px;top:534.97px;font-size:16.00px;color:#50575e;transform:scale(0.9319,0.9550);">300.000</span>
<span class="t" style="left:1535.31px;top:534.97px;font-size:16.00px;color:#50575e;transform:scale(0.9319,0.9550);">0</span>
<span class="t" style="left:1618.30px;top:534.97px;font-size:16.00px;color:#50575e;transform:scale(0.9319,0.9550);">300.000</span>
<span class="t" style="left:1683.00px;top:534.97px;font-size:16.00px;color:#50575e;transform:scale(0.9326,0.9550);">Belum Lunas</span>
<div style="position:absolute;left:165px;top:565px;width:1745px;height:44px;background:#fafafb"></div>
<div style="position:absolute;left:165px;top:609px;width:1745px;height:1px;background:#dee2e6"></div>
<div class="cb" style="left:181px;top:578px"></div>
<span class="t" style="left:214.00px;top:579.47px;font-size:16.00px;color:#50575e;transform:scale(0.9788,0.9550);">INV/2030/00003</span>
<span class="t" style="left:388.20px;top:579.47px;font-size:16.00px;color:#50575e;transform:scale(0.9940,0.9550);">20/02/2030</span>
<span class="t" style="left:488.60px;top:579.47px;font-size:16.00px;color:#50575e;transform:scale(0.9599,0.9550);">Muhammad Rizky Ramadhan</span>
<span class="t" style="left:782.20px;top:579.47px;font-size:16.00px;color:#50575e;transform:scale(0.9454,0.9550);">[004] Buku Paket</span>
<span class="t" style="left:958.90px;top:579.47px;font-size:16.00px;color:#50575e;transform:scale(0.9427,0.9550);">XII - Rekayasa Perangkat Lunak - A</span>
<span class="t" style="left:1360.80px;top:579.47px;font-size:16.00px;color:#50575e;transform:scale(0.9319,0.9550);">300.000</span>
<span class="t" style="left:1535.31px;top:579.47px;font-size:16.00px;color:#50575e;transform:scale(0.9319,0.9550);">0</span>
<span class="t" style="left:1618.30px;top:579.47px;font-size:16.00px;color:#50575e;transform:scale(0.9319,0.9550);">300.000</span>
<span class="t" style="left:1683.00px;top:579.47px;font-size:16.00px;color:#50575e;transform:scale(0.9326,0.9550);">Belum Lunas</span>
<div style="position:absolute;left:165px;top:654px;width:1745px;height:1px;background:#dee2e6"></div>
<div class="cb" style="left:181px;top:623px"></div>
<span class="t" style="left:214.00px;top:624.47px;font-size:16.00px;color:#50575e;transform:scale(0.9788,0.9550);">INV/2030/00002</span>
<span class="t" style="left:388.20px;top:624.47px;font-size:16.00px;color:#50575e;transform:scale(0.9940,0.9550);">20/01/2030</span>
<span class="t" style="left:488.60px;top:624.47px;font-size:16.00px;color:#50575e;transform:scale(0.9583,0.9550);">Muhammad Bayu Firmansyah</span>
<span class="t" style="left:782.20px;top:624.47px;font-size:16.00px;color:#50575e;transform:scale(0.9454,0.9550);">[004] Buku Paket</span>
<span class="t" style="left:958.90px;top:624.47px;font-size:16.00px;color:#50575e;transform:scale(0.9427,0.9550);">XII - Rekayasa Perangkat Lunak - A</span>
<span class="t" style="left:1360.80px;top:624.47px;font-size:16.00px;color:#50575e;transform:scale(0.9319,0.9550);">300.000</span>
<span class="t" style="left:1535.31px;top:624.47px;font-size:16.00px;color:#50575e;transform:scale(0.9319,0.9550);">0</span>
<span class="t" style="left:1618.30px;top:624.47px;font-size:16.00px;color:#50575e;transform:scale(0.9319,0.9550);">300.000</span>
<span class="t" style="left:1683.00px;top:624.47px;font-size:16.00px;color:#50575e;transform:scale(0.9326,0.9550);">Belum Lunas</span>
<div style="position:absolute;left:165px;top:655px;width:1745px;height:44px;background:#fafafb"></div>
<div style="position:absolute;left:165px;top:699px;width:1745px;height:1px;background:#dee2e6"></div>
<div class="cb" style="left:181px;top:668px"></div>
<span class="t" style="left:214.00px;top:669.47px;font-size:16.00px;color:#50575e;transform:scale(0.9788,0.9550);">INV/2030/00001</span>
<span class="t" style="left:388.20px;top:669.47px;font-size:16.00px;color:#50575e;transform:scale(0.9940,0.9550);">20/01/2030</span>
<span class="t" style="left:488.60px;top:669.47px;font-size:16.00px;color:#50575e;transform:scale(0.9599,0.9550);">Muhammad Rizky Ramadhan</span>
<span class="t" style="left:782.20px;top:669.47px;font-size:16.00px;color:#50575e;transform:scale(0.9454,0.9550);">[004] Buku Paket</span>
<span class="t" style="left:958.90px;top:669.47px;font-size:16.00px;color:#50575e;transform:scale(0.9427,0.9550);">XII - Rekayasa Perangkat Lunak - A</span>
<span class="t" style="left:1360.80px;top:669.47px;font-size:16.00px;color:#50575e;transform:scale(0.9319,0.9550);">300.000</span>
<span class="t" style="left:1535.31px;top:669.47px;font-size:16.00px;color:#50575e;transform:scale(0.9319,0.9550);">0</span>
<span class="t" style="left:1618.30px;top:669.47px;font-size:16.00px;color:#50575e;transform:scale(0.9319,0.9550);">300.000</span>
<span class="t" style="left:1683.00px;top:669.47px;font-size:16.00px;color:#50575e;transform:scale(0.9326,0.9550);">Belum Lunas</span>
<div style="position:absolute;left:165px;top:744px;width:1745px;height:1px;background:#dee2e6"></div>
<div class="cb" style="left:181px;top:713px"></div>
<span class="t" style="left:214.00px;top:714.47px;font-size:16.00px;color:#50575e;transform:scale(0.9788,0.9550);">INV/2029/00013</span>
<span class="t" style="left:388.20px;top:714.47px;font-size:16.00px;color:#50575e;transform:scale(0.9940,0.9550);">20/12/2029</span>
<span class="t" style="left:488.60px;top:714.47px;font-size:16.00px;color:#50575e;transform:scale(0.9599,0.9550);">Muhammad Rizky Ramadhan</span>
<span class="t" style="left:782.20px;top:714.47px;font-size:16.00px;color:#50575e;transform:scale(0.9454,0.9550);">[004] Buku Paket</span>
<span class="t" style="left:958.90px;top:714.47px;font-size:16.00px;color:#50575e;transform:scale(0.9427,0.9550);">XII - Rekayasa Perangkat Lunak - A</span>
<span class="t" style="left:1360.80px;top:714.47px;font-size:16.00px;color:#50575e;transform:scale(0.9319,0.9550);">300.000</span>
<span class="t" style="left:1535.31px;top:714.47px;font-size:16.00px;color:#50575e;transform:scale(0.9319,0.9550);">0</span>
<span class="t" style="left:1618.30px;top:714.47px;font-size:16.00px;color:#50575e;transform:scale(0.9319,0.9550);">300.000</span>
<span class="t" style="left:1683.00px;top:714.47px;font-size:16.00px;color:#50575e;transform:scale(0.9326,0.9550);">Belum Lunas</span>
<div style="position:absolute;left:165px;top:745px;width:1745px;height:44px;background:#fafafb"></div>
<div style="position:absolute;left:165px;top:789px;width:1745px;height:1px;background:#dee2e6"></div>
<div class="cb" style="left:181px;top:758px"></div>
<span class="t" style="left:214.00px;top:759.47px;font-size:16.00px;color:#50575e;transform:scale(0.9788,0.9550);">INV/2029/00014</span>
<span class="t" style="left:388.20px;top:759.47px;font-size:16.00px;color:#50575e;transform:scale(0.9940,0.9550);">20/12/2029</span>
<span class="t" style="left:488.60px;top:759.47px;font-size:16.00px;color:#50575e;transform:scale(0.9583,0.9550);">Muhammad Bayu Firmansyah</span>
<span class="t" style="left:782.20px;top:759.47px;font-size:16.00px;color:#50575e;transform:scale(0.9454,0.9550);">[004] Buku Paket</span>
<span class="t" style="left:958.90px;top:759.47px;font-size:16.00px;color:#50575e;transform:scale(0.9427,0.9550);">XII - Rekayasa Perangkat Lunak - A</span>
<span class="t" style="left:1360.80px;top:759.47px;font-size:16.00px;color:#50575e;transform:scale(0.9319,0.9550);">300.000</span>
<span class="t" style="left:1535.31px;top:759.47px;font-size:16.00px;color:#50575e;transform:scale(0.9319,0.9550);">0</span>
<span class="t" style="left:1618.30px;top:759.47px;font-size:16.00px;color:#50575e;transform:scale(0.9319,0.9550);">300.000</span>
<span class="t" style="left:1683.00px;top:759.47px;font-size:16.00px;color:#50575e;transform:scale(0.9326,0.9550);">Belum Lunas</span>
<div style="position:absolute;left:165px;top:834px;width:1745px;height:1px;background:#dee2e6"></div>
<div class="cb" style="left:181px;top:803px"></div>
<span class="t" style="left:214.00px;top:804.47px;font-size:16.00px;color:#50575e;transform:scale(0.9788,0.9550);">INV/2029/00011</span>
<span class="t" style="left:388.20px;top:804.47px;font-size:16.00px;color:#50575e;transform:scale(0.9940,0.9550);">20/11/2029</span>
<span class="t" style="left:488.60px;top:804.47px;font-size:16.00px;color:#50575e;transform:scale(0.9599,0.9550);">Muhammad Rizky Ramadhan</span>
<span class="t" style="left:782.20px;top:804.47px;font-size:16.00px;color:#50575e;transform:scale(0.9454,0.9550);">[004] Buku Paket</span>
<span class="t" style="left:958.90px;top:804.47px;font-size:16.00px;color:#50575e;transform:scale(0.9427,0.9550);">XII - Rekayasa Perangkat Lunak - A</span>
<span class="t" style="left:1360.80px;top:804.47px;font-size:16.00px;color:#50575e;transform:scale(0.9319,0.9550);">300.000</span>
<span class="t" style="left:1535.31px;top:804.47px;font-size:16.00px;color:#50575e;transform:scale(0.9319,0.9550);">0</span>
<span class="t" style="left:1618.30px;top:804.47px;font-size:16.00px;color:#50575e;transform:scale(0.9319,0.9550);">300.000</span>
<span class="t" style="left:1683.00px;top:804.47px;font-size:16.00px;color:#50575e;transform:scale(0.9326,0.9550);">Belum Lunas</span>
<div style="position:absolute;left:165px;top:835px;width:1745px;height:44px;background:#fafafb"></div>
<div style="position:absolute;left:165px;top:879px;width:1745px;height:1px;background:#dee2e6"></div>
<div class="cb" style="left:181px;top:848px"></div>
<span class="t" style="left:214.00px;top:849.47px;font-size:16.00px;color:#50575e;transform:scale(0.9788,0.9550);">INV/2029/00012</span>
<span class="t" style="left:388.20px;top:849.47px;font-size:16.00px;color:#50575e;transform:scale(0.9940,0.9550);">20/11/2029</span>
<span class="t" style="left:488.60px;top:849.47px;font-size:16.00px;color:#50575e;transform:scale(0.9583,0.9550);">Muhammad Bayu Firmansyah</span>
<span class="t" style="left:782.20px;top:849.47px;font-size:16.00px;color:#50575e;transform:scale(0.9454,0.9550);">[004] Buku Paket</span>
<span class="t" style="left:958.90px;top:849.47px;font-size:16.00px;color:#50575e;transform:scale(0.9427,0.9550);">XII - Rekayasa Perangkat Lunak - A</span>
<span class="t" style="left:1360.80px;top:849.47px;font-size:16.00px;color:#50575e;transform:scale(0.9319,0.9550);">300.000</span>
<span class="t" style="left:1535.31px;top:849.47px;font-size:16.00px;color:#50575e;transform:scale(0.9319,0.9550);">0</span>
<span class="t" style="left:1618.30px;top:849.47px;font-size:16.00px;color:#50575e;transform:scale(0.9319,0.9550);">300.000</span>
<span class="t" style="left:1683.00px;top:849.47px;font-size:16.00px;color:#50575e;transform:scale(0.9326,0.9550);">Belum Lunas</span>
<div style="position:absolute;left:165px;top:924px;width:1745px;height:1px;background:#dee2e6"></div>
<div class="cb" style="left:181px;top:893px"></div>
<span class="t" style="left:214.00px;top:894.47px;font-size:16.00px;color:#50575e;transform:scale(0.9788,0.9550);">INV/2029/00010</span>
<span class="t" style="left:388.20px;top:894.47px;font-size:16.00px;color:#50575e;transform:scale(0.9940,0.9550);">20/10/2029</span>
<span class="t" style="left:488.60px;top:894.47px;font-size:16.00px;color:#50575e;transform:scale(0.9583,0.9550);">Muhammad Bayu Firmansyah</span>
<span class="t" style="left:782.20px;top:894.47px;font-size:16.00px;color:#50575e;transform:scale(0.9454,0.9550);">[004] Buku Paket</span>
<span class="t" style="left:958.90px;top:894.47px;font-size:16.00px;color:#50575e;transform:scale(0.9427,0.9550);">XII - Rekayasa Perangkat Lunak - A</span>
<span class="t" style="left:1360.80px;top:894.47px;font-size:16.00px;color:#50575e;transform:scale(0.9319,0.9550);">300.000</span>
<span class="t" style="left:1535.31px;top:894.47px;font-size:16.00px;color:#50575e;transform:scale(0.9319,0.9550);">0</span>
<span class="t" style="left:1618.30px;top:894.47px;font-size:16.00px;color:#50575e;transform:scale(0.9319,0.9550);">300.000</span>
<span class="t" style="left:1683.00px;top:894.47px;font-size:16.00px;color:#50575e;transform:scale(0.9326,0.9550);">Belum Lunas</span>
<div style="position:absolute;left:1910px;top:119px;width:5px;height:788px;background:#f8f9fa"></div>
<div style="position:absolute;left:1910px;top:119px;width:5px;height:351px;border-radius:3px;background:#888b8b"></div>
<div style="position:absolute;left:162px;top:116px;width:1756px;height:3px;background:#ff0000"></div>
<div style="position:absolute;left:162px;top:116px;width:4px;height:791px;background:#ff0000"></div>
<div style="position:absolute;left:1915px;top:116px;width:3px;height:791px;background:#ff0000"></div>
<div style="position:absolute;left:162px;top:905px;width:1756px;height:3px;background:#ff0000"></div></body></html>
